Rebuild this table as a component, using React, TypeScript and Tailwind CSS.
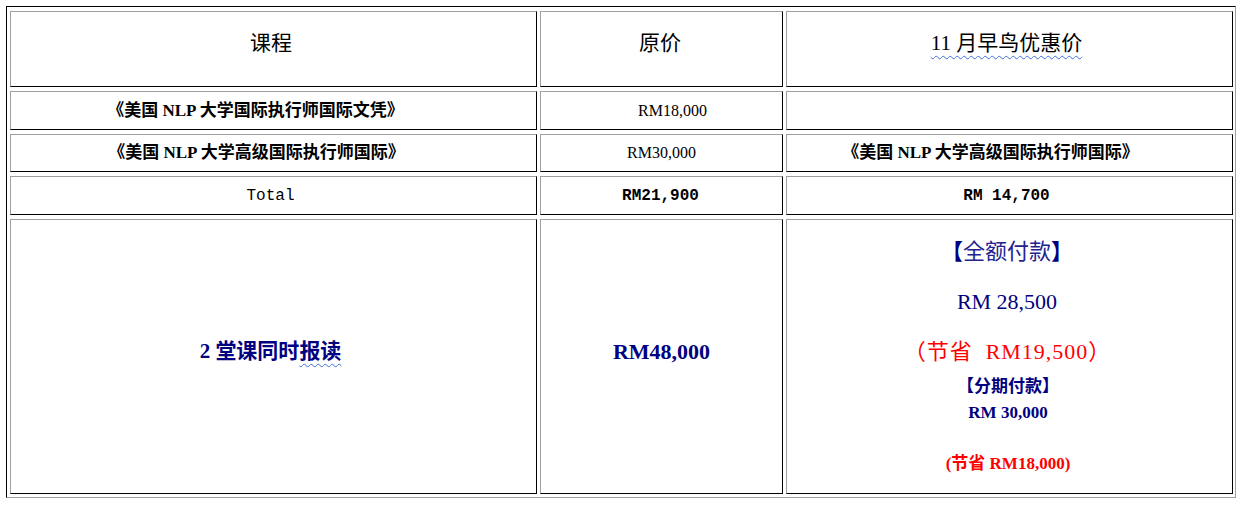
const serif = "font-['Liberation_Serif','Noto_Sans_CJK_SC',serif]";
const mono = "font-['Liberation_Mono','Noto_Sans_CJK_SC',monospace]";

function Cell({ className = '', children }: { className?: string; children?: React.ReactNode }) {
  return (
    <div
      className={`flex items-center justify-center border border-t-[#a0a0a0] border-l-[#a0a0a0] border-r-black border-b-black text-center ${className}`}
    >
      {children}
    </div>
  );
}

const spell = 'underline decoration-wavy decoration-[#3f6fd8] decoration-1 underline-offset-[5px]';

export default function App() {
  return (
    <div className={`min-h-[513px] w-[1245px] bg-white pl-[6px] pt-[6px] text-black ${serif}`}>
      <div className="w-[1230px] border border-t-black border-l-black border-r-[#a0a0a0] border-b-[#a0a0a0] pb-[3px] pl-[3px] pr-[2px] pt-[4px]">
        <div className="grid grid-cols-[527px_243px_447px] grid-rows-[76px_39px_38px_39px_275px] gap-x-[3px] gap-y-[4px]">
          {/* Header */}
          <Cell className="pb-[10px] pr-[5px] text-[21px]">课程</Cell>
          <Cell className="pb-[10px] pr-[3px] text-[21px]">原价</Cell>
          <Cell className="pb-[10px] pr-[6px] text-[21px]">
            <span className={spell}>11 月早鸟优惠价</span>
          </Cell>

          {/* Course 1 */}
          <Cell className="pr-[36px] text-[17px] font-bold">《美国 NLP 大学国际执行师国际文凭》</Cell>
          <Cell className="pl-[22px] text-[16px]">RM18,000</Cell>
          <Cell />

          {/* Course 2 */}
          <Cell className="pr-[34px] text-[17px] font-bold">《美国 NLP 大学高级国际执行师国际》</Cell>
          <Cell className="text-[16px]">RM30,000</Cell>
          <Cell className="pr-[38px] text-[17px] font-bold">《美国 NLP 大学高级国际执行师国际》</Cell>

          {/* Total */}
          <Cell className={`${mono} pr-[6px] text-[16px]`}>Total</Cell>
          <Cell className={`${mono} pr-[2px] text-[16px] font-bold`}>RM21,900</Cell>
          <Cell className={`${mono} pr-[6px] text-[16px] font-bold`}>RM 14,700</Cell>

          {/* Bundle */}
          <Cell className="pb-[10px] pr-[6px] text-[21px] font-bold text-[#000080]">
            <span>
              2 堂课同时<span className={spell}>报读</span>
            </span>
          </Cell>
          <Cell className="pb-[10px] text-[22px] font-bold text-[#000080]">RM48,000</Cell>
          <div className="flex flex-col items-stretch border border-t-[#a0a0a0] border-l-[#a0a0a0] border-r-black border-b-black pt-[6px] text-center">
            <div className="flex h-[50px] items-center justify-center pr-[5px] text-[22px] text-[#23238f]">
              <span className="font-bold text-[#000080]">【</span>全额付款<span className="font-bold text-[#000080]">】</span>
            </div>
            <div className="flex h-[50px] items-center justify-center pr-[5px] text-[22px] text-[#000080]">RM 28,500</div>
            <div className="flex h-[50px] items-center justify-center pr-[4px] text-[22px] tracking-[1px] text-[#ff0000]">（节省&nbsp;&nbsp;RM19,500）</div>
            <div className="flex h-[22px] items-center justify-center pr-[3px] text-[17px] font-bold text-[#000080]">【分期付款】</div>
            <div className="flex h-[30px] items-center justify-center pr-[3px] text-[17px] font-bold text-[#000080]">RM 30,000</div>
            <div className="h-[24px]" />
            <div className="flex h-[24px] items-center justify-center pr-[3px] text-[17px] font-bold text-[#ff0000]">(节省 RM18,000)</div>
          </div>
        </div>
      </div>
    </div>
  );
}
